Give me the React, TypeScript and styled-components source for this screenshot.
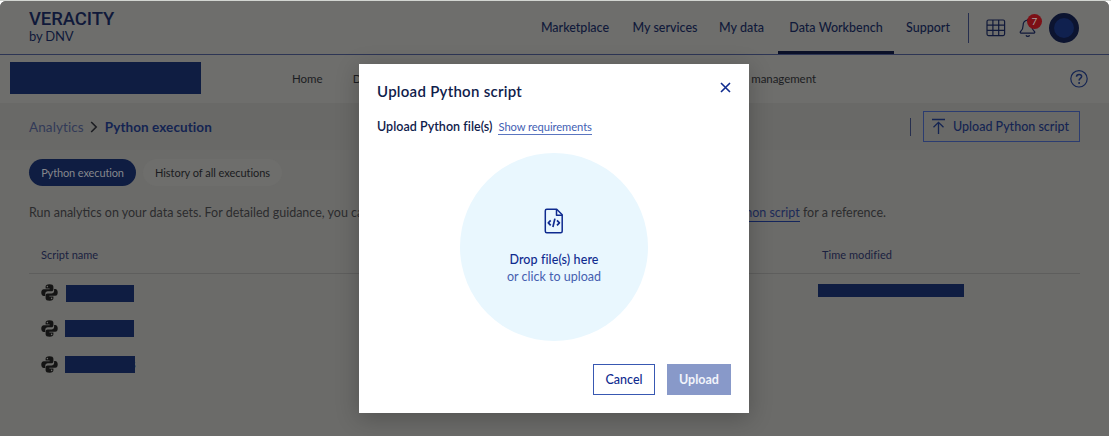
import React from "react";
import styled, { createGlobalStyle } from "styled-components";

const c = {
  ink: "#10193a",
  blue: "#142452",
  block: "#0f1d42",
  surface: "#6e6e6c",
  band: "#696967",
  body: "#6b6b69",
  royal: "#0f2b8f",
};

const GlobalStyle = createGlobalStyle`
  * { box-sizing: border-box; }
  html, body { margin: 0; background: #fff; }
  body { font-family: Lato, "Open Sans", sans-serif; overflow: hidden; }
`;

const Screen = styled.div`
  position: relative;
  width: 1111px;
  height: 436px;
  padding: 1px 2px 0 0;
  background: linear-gradient(#d2d5d1 0 1px, #fff 1px);
  white-space: nowrap;
`;

const Page = styled.div`
  height: 435px;
  display: flex;
  flex-direction: column;
  overflow: hidden;
  border-radius: 6px 6px 0 0;
  background: ${c.body};
`;

const Label = styled.span<{ $size: number; $track?: number; $weight?: number; $color?: string }>`
  font-size: ${(p) => p.$size}px;
  letter-spacing: ${(p) => p.$track ?? 0}px;
  font-weight: ${(p) => p.$weight ?? 400};
  color: ${(p) => p.$color ?? "inherit"};
  line-height: 18px;
`;

const Header = styled.header`
  flex: none;
  height: 54px;
  display: flex;
  align-items: flex-start;
  padding-left: 29px;
  background: ${c.surface};
  border-bottom: 1px solid #2d3554;
`;

const Brand = styled.div`
  width: 496px;
  padding-top: 10px;
  display: flex;
  flex-direction: column;
  color: ${c.ink};
`;

const BrandName = styled.span`
  font: 500 18.5px/17px Roboto, sans-serif;
  letter-spacing: -0.1px;
`;

const BrandBy = styled.span`
  font-size: 13px;
  line-height: 17px;
  letter-spacing: -0.2px;
`;

const NavItem = styled.a<{ $width: number; $active?: boolean }>`
  width: ${(p) => p.$width}px;
  height: 53px;
  display: flex;
  align-items: center;
  justify-content: center;
  color: ${c.ink};
  border-bottom: 3px solid ${(p) => (p.$active ? "#0a1028" : "transparent")};
  padding-top: 4px;
`;

const Tools = styled.div`
  height: 53px;
  display: flex;
  align-items: center;
  color: ${c.ink};
`;

const Rule = styled.i<{ $height: number; $before?: number }>`
  width: 1px;
  height: ${(p) => p.$height}px;
  margin-left: ${(p) => p.$before ?? 0}px;
  background: #262e4e;
`;

const Bell = styled.div`
  position: relative;
  width: 18px;
  height: 20px;
  margin-left: 13px;
`;

const Badge = styled.span`
  position: absolute;
  left: 8px;
  top: -4px;
  width: 15px;
  height: 15px;
  border-radius: 50%;
  background: #7d1016;
  color: #a3a09f;
  font-size: 10px;
  line-height: 15px;
  text-align: center;
`;

const Avatar = styled.div`
  width: 30px;
  height: 30px;
  margin-left: 12px;
  border: 5.5px solid #0c1430;
  border-radius: 50%;
  background: #10214f;
`;

const SubNav = styled.nav`
  flex: none;
  height: 48px;
  display: flex;
  align-items: center;
  padding: 0 21px 0 10px;
  background: ${c.surface};
  color: #1c1d22;
`;

const Redacted = styled.div<{ $w: number; $h: number; $lift?: number }>`
  position: relative;
  z-index: 1;
  width: ${(p) => p.$w}px;
  height: ${(p) => p.$h}px;
  margin-bottom: ${(p) => p.$lift ?? 0}px;
  background: ${c.block};
`;

const SubNavItem = styled(Label)<{ $left?: number; $right?: number }>`
  margin-left: ${(p) => p.$left ?? 0}px;
  margin-right: ${(p) => p.$right ?? 0}px;
`;

const Crumbs = styled.div`
  flex: none;
  height: 47px;
  display: flex;
  align-items: center;
  padding: 0 29px;
  background: ${c.band};
  color: ${c.blue};
`;

const CrumbArrow = styled.svg`
  margin: 0 7px 0 6px;
`;

const OutlineButton = styled.button`
  width: 157px;
  height: 31px;
  margin-left: 12px;
  padding: 0 0 0 7px;
  display: flex;
  align-items: center;
  gap: 7px;
  background: transparent;
  border: 1px solid #2b3c70;
  color: ${c.blue};
  font-family: inherit;
`;

const Spacer = styled.div`
  flex: 1;
`;

const Content = styled.main`
  padding: 9px 29px 0;
`;

const Pills = styled.div`
  display: flex;
  gap: 7px;
`;

const Pill = styled.div<{ $width: number; $active?: boolean }>`
  width: ${(p) => p.$width}px;
  height: 27px;
  display: flex;
  align-items: center;
  justify-content: center;
  border-radius: 14px;
  background: ${(p) => (p.$active ? c.block : "#6e6e6c")};
  color: ${(p) => (p.$active ? "#85878c" : "#1a1b20")};
`;

const Intro = styled.div`
  display: flex;
  justify-content: space-between;
  margin-top: 18px;
  padding-right: 194px;
  color: #2b2c2e;
`;

const ScriptLink = styled.span`
  display: inline-block;
  line-height: 16px;
  color: #1c2a58;
  border-bottom: 1px solid #14255c;
`;

const TableHead = styled.div`
  height: 52px;
  display: grid;
  grid-template-columns: 781px 1fr;
  align-items: center;
  padding: 15px 0 0 12px;
  color: #1a2140;
  border-bottom: 1px solid #5e5e5d;
`;

const Row = styled.div`
  height: 36px;
  display: grid;
  grid-template-columns: 24px 753px 1fr;
  align-items: center;
  padding-left: 12px;
`;

const NameCell = styled.div<{ $top?: number; $left?: number }>`
  display: flex;
  align-items: center;
  padding: ${(p) => p.$top ?? 0}px 0 0 ${(p) => p.$left ?? 0}px;
`;

const NameTail = styled(Label)`
  margin-left: -4px;
`;

const Overlay = styled.div`
  position: absolute;
  inset: 0;
  z-index: 2;
  padding: 64px 0 0 359px;
`;

const Dialog = styled.section`
  width: 390px;
  height: 349px;
  padding: 18px;
  display: flex;
  flex-direction: column;
  background: #fff;
  box-shadow: 0 5px 22px rgba(0, 0, 0, 0.24);
`;

const DialogHead = styled.div`
  display: flex;
  justify-content: space-between;
  color: #0f204b;
`;

const FileLine = styled.div`
  display: flex;
  align-items: center;
  gap: 6px;
  margin-top: 18px;
  color: #0f204b;
`;

const RequirementsLink = styled.a`
  display: inline-flex;
  align-items: center;
  height: 16px;
  color: #4361b4;
  border-bottom: 1px solid #5b76c0;
`;

const DropZone = styled.div`
  width: 188px;
  height: 188px;
  margin: 17px auto 0;
  padding-top: 55px;
  display: flex;
  flex-direction: column;
  align-items: center;
  border-radius: 50%;
  background: #e9f7fe;
`;

const DropTitle = styled(Label)`
  margin-top: 17px;
  line-height: 17px;
`;

const Actions = styled.div`
  display: flex;
  justify-content: flex-end;
  gap: 12px;
  margin-top: 23px;
`;

const ActionButton = styled.button<{ $width: number; $disabled?: boolean }>`
  width: ${(p) => p.$width}px;
  height: 31px;
  padding: 0;
  font-family: inherit;
  border: 1px solid ${(p) => (p.$disabled ? "#8899c9" : "#3858b2")};
  background: ${(p) => (p.$disabled ? "#8899c9" : "#fff")};
  color: ${(p) => (p.$disabled ? "#f1f4fb" : c.royal)};
`;

const GridSvg = styled.svg`
  margin-left: 17px;
`;

const GridIcon = () => (
  <GridSvg width="20" height="18" viewBox="0 0 20 18" fill="none" stroke="currentColor" strokeWidth="1.2">
    <rect x="1" y="1" width="17.6" height="15.6" rx="1.5" />
    <path d="M1 6.2h17.6M1 11.4h17.6M6.9 1v15.6M12.7 1v15.6" />
  </GridSvg>
);

const BellIcon = () => (
  <svg width="18" height="20" viewBox="0 0 18 20" fill="none" stroke="currentColor" strokeWidth="1.2" strokeLinejoin="round">
    <path d="M9 2.2C5.7 2.2 4.1 4.5 4.1 7.4c0 3.6-1 4.8-2.5 6.1-.7.7-.4 1.7.5 1.7h12.8c.9 0 1.2-1 .5-1.7-1.5-1.3-2.5-2.5-2.5-6.1C12.9 4.5 11.7 2.2 9 2.2z" />
    <path d="M7 17.2c.3.8 1 1.2 1.8 1.2s1.5-.4 1.8-1.2M8.7 2.2V1" />
  </svg>
);

const HelpIcon = () => (
  <svg width="18" height="18" viewBox="0 0 18 18" fill="none" stroke={c.blue} strokeWidth="1.2">
    <circle cx="9" cy="8.8" r="8.2" />
    <path d="M6.5 6.8c0-1.7 1.1-2.4 2.6-2.4s2.5.8 2.5 2.1c0 1.9-2.5 1.8-2.5 3.9" strokeWidth="1.5" />
    <circle cx="9.1" cy="12.9" r="1" fill={c.blue} stroke="none" />
  </svg>
);

const UploadIcon = () => (
  <svg width="15" height="17" viewBox="0 0 15 17" fill="none" stroke="currentColor" strokeWidth="1.3">
    <path d="M1 1.5h13M7.5 16V4.5M2.5 9.3l5-5 5 5" />
  </svg>
);

const PythonIcon = () => (
  <svg width="17" height="17" viewBox="0 0 24 24" fill="#141414">
    <path d="M11.9.5C8 .5 6.5 1.8 6.5 4v2.5h5.7v.9H4C1.7 7.4.4 9.4.4 12.1c0 2.9 1.4 4.8 3.6 4.8h2v-2.8c0-2.2 1.6-3.7 3.7-3.7h4.9c1.7 0 2.9-1.3 2.9-2.9V4C17.5 1.6 15.5.5 11.9.5zM9 2.6a1.1 1.1 0 1 1 0 2.2 1.1 1.1 0 0 1 0-2.2z" />
    <path d="M12.1 23.5c3.9 0 5.4-1.3 5.4-3.5v-2.5h-5.7v-.9H20c2.3 0 3.6-2 3.6-4.7 0-2.9-1.4-4.8-3.6-4.8h-1.5v2.8c0 2.2-1.6 3.5-3.7 3.5H9.4c-1.7 0-2.9 1.3-2.9 2.9V20c0 2.4 2 3.5 5.6 3.5zM15 21.4a1.1 1.1 0 1 1 0-2.2 1.1 1.1 0 0 1 0 2.2z" />
  </svg>
);

const CodeFileIcon = () => (
  <svg width="20" height="26" viewBox="0 0 20 26" fill="none" stroke={c.royal} strokeWidth="1.5" strokeLinejoin="round">
    <path d="M2.8 1.3h9.9l5.5 5.5v16.4q0 1.5-1.5 1.5H2.8q-1.5 0-1.5-1.5V2.8q0-1.5 1.5-1.5z" />
    <path d="M12.5 1.5v5.7h5.7" />
    <path d="M6.7 12.3 4.3 14.8l2.4 2.5M13 12.3l2.4 2.5-2.4 2.5M10.9 10.6 8.9 19" strokeWidth="1.7" />
  </svg>
);

export default function App() {
  return (
    <Screen>
      <GlobalStyle />
      <Page>
        <Header>
          <Brand>
            <BrandName>VERACITY</BrandName>
            <BrandBy>by DNV</BrandBy>
          </Brand>
          <NavItem $width={100}><Label $size={12.5} $weight={500}>Marketplace</Label></NavItem>
          <NavItem $width={80}><Label $size={12.5} $weight={500}>My services</Label></NavItem>
          <NavItem $width={73}><Label $size={12.5} $weight={500}>My data</Label></NavItem>
          <NavItem $width={116} $active><Label $size={12.5} $weight={500}>Data Workbench</Label></NavItem>
          <NavItem $width={68}><Label $size={12.5} $weight={500}>Support</Label></NavItem>
          <Tools>
            <Rule $height={30} $before={6} />
            <GridIcon />
            <Bell>
              <BellIcon />
              <Badge>7</Badge>
            </Bell>
            <Avatar />
          </Tools>
        </Header>
        <SubNav>
          <Redacted $w={191} $h={32} $lift={3} />
          <SubNavItem $size={11.5} $left={91}>Home</SubNavItem>
          <SubNavItem $size={11.5} $left={30}>Data</SubNavItem>
          <Spacer />
          <SubNavItem $size={11.5} $track={-0.05} $right={254}>management</SubNavItem>
          <HelpIcon />
        </SubNav>
        <Crumbs>
          <Label $size={13.5} $track={0.1} $color="#323a58">Analytics</Label>
          <CrumbArrow width="8" height="12" viewBox="0 0 8 12" fill="none" stroke="#1c1d22" strokeWidth="1.6">
            <path d="m1.2 1 5 5-5 5" />
          </CrumbArrow>
          <Label $size={13.5} $track={0.08} $weight={700}>Python execution</Label>
          <Spacer />
          <Rule $height={18} />
          <OutlineButton>
            <UploadIcon />
            <Label $size={12.5} $weight={500}>Upload Python script</Label>
          </OutlineButton>
        </Crumbs>
        <Content>
          <Pills>
            <Pill $width={107} $active><Label $size={11} $track={-0.12}>Python execution</Label></Pill>
            <Pill $width={139}><Label $size={11} $track={-0.04}>History of all executions</Label></Pill>
          </Pills>
          <Intro>
            <Label $size={12.5}>Run analytics on your data sets. For detailed guidance, you can</Label>
            <Label $size={12.5}><ScriptLink>Python script</ScriptLink> for a reference.</Label>
          </Intro>
          <TableHead>
            <Label $size={11}>Script name</Label>
            <Label $size={11} $track={0.05}>Time modified</Label>
          </TableHead>
          <Row>
            <PythonIcon />
            <NameCell $top={3} $left={1}><Redacted $w={68} $h={17} /></NameCell>
            <Redacted $w={146} $h={13} $lift={3} />
          </Row>
          <Row>
            <PythonIcon />
            <NameCell><Redacted $w={69} $h={17} /></NameCell>
          </Row>
          <Row>
            <PythonIcon />
            <NameCell>
              <Redacted $w={70} $h={17} />
              <NameTail $size={11} $color="#24262e">s</NameTail>
            </NameCell>
          </Row>
        </Content>
      </Page>
      <Overlay>
        <Dialog>
          <DialogHead>
            <Label $size={15} $weight={600} $track={0.27}>Upload Python script</Label>
            <svg width="11" height="11" viewBox="0 0 11 11" stroke={c.royal} strokeWidth="1.6">
              <path d="m1 1 9 9M10 1 1 10" />
            </svg>
          </DialogHead>
          <FileLine>
            <Label $size={12.5} $weight={600} $track={0.04}>Upload Python file(s)</Label>
            <RequirementsLink><Label $size={11.2} $track={-0.08}>Show requirements</Label></RequirementsLink>
          </FileLine>
          <DropZone>
            <CodeFileIcon />
            <DropTitle $size={12.5} $weight={500} $track={0.1} $color={c.royal}>Drop file(s) here</DropTitle>
            <Label $size={12.5} $color="#4560b0">or click to upload</Label>
          </DropZone>
          <Actions>
            <ActionButton $width={62}><Label $size={12.5} $weight={500}>Cancel</Label></ActionButton>
            <ActionButton $width={64} $disabled><Label $size={12.5} $weight={700}>Upload</Label></ActionButton>
          </Actions>
        </Dialog>
      </Overlay>
    </Screen>
  );
}
